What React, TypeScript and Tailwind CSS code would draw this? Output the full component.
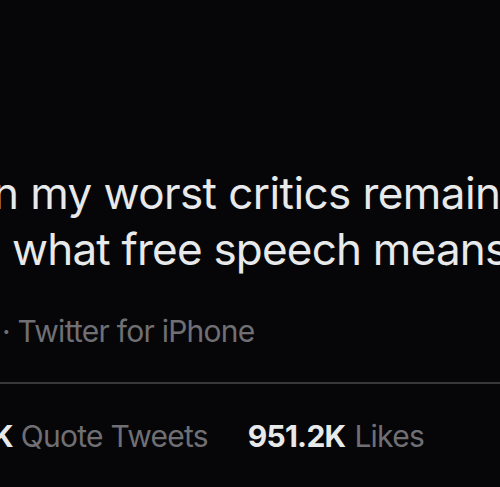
export default function App() {
  return (
    <div className="w-[500px] h-[487px] overflow-hidden bg-[#060608] font-['Inter','Helvetica',sans-serif]">
      <div className="pt-[165px]">
        <p className="ml-[-7px] whitespace-nowrap text-[44px] leading-[56px] tracking-[-0.013em] text-[#e7e9ea]">
          n my worst critics remain on Twitter,
        </p>
        <p className="pl-[12px] whitespace-nowrap text-[44px] leading-[56px] tracking-[-0.018em] text-[#e7e9ea]">
          what free speech means
        </p>
        <p className="mt-[36px] whitespace-nowrap pl-[2px] text-[30px] leading-[36px] tracking-[-0.025em] text-[#6f6f74]">
          · Twitter for iPhone
        </p>
        <div className="mt-[33px] h-[2px] bg-[#38383a]" />
        <div className="mt-[34px] ml-[-8px] flex whitespace-nowrap text-[30px] leading-[36px] tracking-[-0.025em]">
          <span className="font-bold text-[#e7e9ea]">K</span>
          <span className="ml-[8px] text-[#6f6f74]">Quote Tweets</span>
          <span className="ml-[40px] font-bold text-[#e7e9ea]">951.2K</span>
          <span className="ml-[9px] text-[#6f6f74]">Likes</span>
        </div>
      </div>
    </div>
  );
}
